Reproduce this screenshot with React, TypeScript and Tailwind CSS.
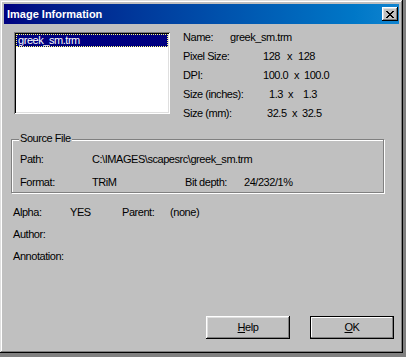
import React from "react";

const raised =
  "shadow-[inset_-1px_-1px_0_#000,inset_1px_1px_0_#fff,inset_-2px_-2px_0_#808080,inset_2px_2px_0_#dfdfdf]";

function CloseGlyph() {
  // classic 8x7 pixel X
  const rows = [
    [0, 2, 6, 2],
    [1, 2, 5, 2],
    [2, 4],
    [3, 2],
    [2, 4],
    [1, 2, 5, 2],
    [0, 2, 6, 2],
  ];
  return (
    <svg width="8" height="7" viewBox="0 0 8 7" shapeRendering="crispEdges" aria-hidden="true">
      {rows.map((r, y) =>
        r.length === 4 ? (
          <g key={y}>
            <rect x={r[0]} y={y} width={r[1]} height={1} fill="#000" />
            <rect x={r[2]} y={y} width={r[3]} height={1} fill="#000" />
          </g>
        ) : (
          <rect key={y} x={r[0]} y={y} width={r[1]} height={1} fill="#000" />
        )
      )}
    </svg>
  );
}

function SizeRow({
  label,
  a,
  b,
  ml,
  aw,
  xw,
}: {
  label: string;
  a: string;
  b: string;
  ml: string;
  aw: string;
  xw: string;
}) {
  return (
    <div className="flex h-[19px] items-center whitespace-pre">
      <span className="w-[80px] shrink-0">{label}</span>
      <span className={`${ml} ${aw} shrink-0`}>{a}</span>
      <span className={`${xw} shrink-0`}>x</span>
      <span>{b}</span>
    </div>
  );
}

function Button({ children, isDefault }: { children: React.ReactNode; isDefault?: boolean }) {
  return (
    <button
      className={
        isDefault
          ? "flex h-[23px] w-[84px] items-center justify-center border border-black bg-[#c0c0c0] shadow-[inset_-1px_-1px_0_#808080,inset_1px_1px_0_#fff]"
          : `flex h-[23px] w-[84px] items-center justify-center bg-[#c0c0c0] ${raised}`
      }
    >
      {children}
    </button>
  );
}

export default function App() {
  return (
    <div className="h-[357px] w-[406px] bg-[#808080] font-['Liberation_Sans',Arial,sans-serif] text-[11px] leading-[13px] tracking-[-0.45px] text-black">
      <div className="flex h-[353px] w-[403px] flex-col bg-[#c0c0c0] p-[4px] shadow-[inset_-1px_-1px_0_#000,inset_1px_1px_0_#dfdfdf,inset_-2px_-2px_0_#808080,inset_2px_2px_0_#fff]">
        {/* Title bar */}
        <div className="flex h-[20px] shrink-0 items-center justify-between bg-gradient-to-r from-[#000080] to-[#1084d0] pl-[3px] pr-[1px]">
          <span className="text-[11px] font-bold tracking-normal text-white">Image Information</span>
          <div className={`flex h-[14px] w-[16px] items-center justify-center bg-[#c0c0c0] ${raised}`}>
            <CloseGlyph />
          </div>
        </div>

        {/* Body */}
        <div className="flex flex-1 flex-col pl-[7px] pr-[5px] pb-[10px] pt-[4px]">
          <div className="flex items-start">
            <div className="ml-[3px] mt-[4px] h-[82px] w-[156px] shrink-0 bg-white p-[2px] shadow-[inset_1px_1px_0_#808080,inset_-1px_-1px_0_#fff,inset_2px_2px_0_#000,inset_-2px_-2px_0_#dfdfdf]">
              <div className="flex h-[13px] items-center border border-dotted border-[#ffff80] bg-[#000080] pl-[1px] text-white">
                greek_sm.trm
              </div>
            </div>

            <div className="ml-[13px] flex flex-col">
              <div className="flex h-[19px] items-center">
                <span className="w-[47px] shrink-0">Name:</span>
                <span>greek_sm.trm</span>
              </div>
              <SizeRow label="Pixel Size:" a="128" b="128" ml="ml-0" aw="w-[24px]" xw="w-[11px]" />
              <SizeRow label="DPI:" a="100.0" b="100.0" ml="ml-0" aw="w-[31px]" xw="w-[10px]" />
              <SizeRow label="Size (inches):" a="1.3" b="1.3" ml="ml-[6px]" aw="w-[19px]" xw="w-[15px]" />
              <SizeRow label="Size (mm):" a="32.5" b="32.5" ml="ml-[4px]" aw="w-[25px]" xw="w-[10px]" />
            </div>
          </div>

          {/* Source File group */}
          <div className="relative mr-[10px] mt-[16px] flex h-[54px] flex-col gap-[4px] border border-[#808080] pl-[8px] pt-[10px] shadow-[1px_1px_0_#fff,inset_1px_1px_0_#fff]">
            <span className="absolute left-[7px] top-[-8px] bg-[#c0c0c0] px-[1px]">Source File</span>
            <div className="flex h-[19px] items-center">
              <span className="w-[72px] shrink-0">Path:</span>
              <span>C:\IMAGES\scapesrc\greek_sm.trm</span>
            </div>
            <div className="flex h-[19px] items-center">
              <span className="w-[72px] shrink-0">Format:</span>
              <span className="w-[93px] shrink-0">TRiM</span>
              <span className="w-[59px] shrink-0">Bit depth:</span>
              <span>24/232/1%</span>
            </div>
          </div>

          <div className="ml-[2px] mt-[10px] flex flex-col gap-[3px]">
            <div className="flex h-[19px] items-center">
              <span className="w-[57px] shrink-0">Alpha:</span>
              <span className="w-[52px] shrink-0">YES</span>
              <span className="w-[48px] shrink-0">Parent:</span>
              <span>(none)</span>
            </div>
            <div className="flex h-[19px] items-center">Author:</div>
            <div className="flex h-[19px] items-center">Annotation:</div>
          </div>

          <div className="mt-auto flex justify-end gap-[20px]">
            <Button>
              <span>
                <span className="underline underline-offset-[1px]">H</span>elp
              </span>
            </Button>
            <Button isDefault>
              <span>
                <span className="underline underline-offset-[1px]">O</span>K
              </span>
            </Button>
          </div>
        </div>
      </div>
    </div>
  );
}
